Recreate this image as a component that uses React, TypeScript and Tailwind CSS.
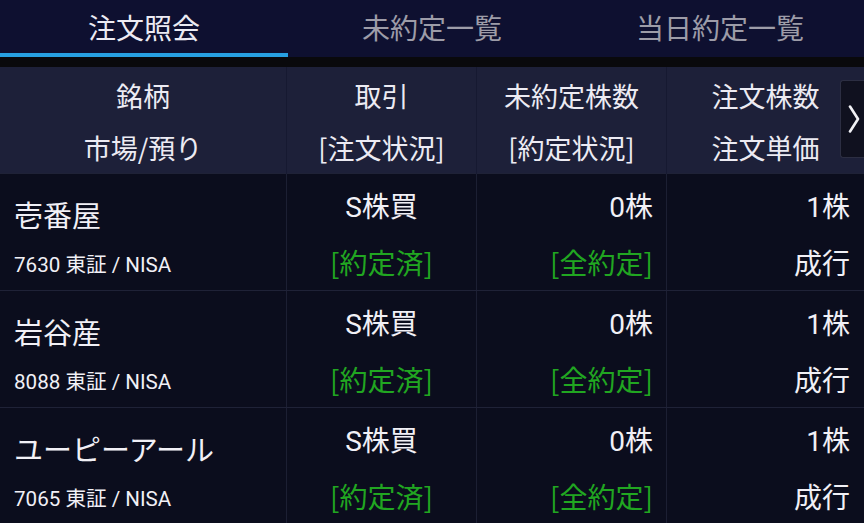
import React from "react";

const font = { fontFamily: '"Noto Sans CJK JP", "Noto Sans", sans-serif' };
const roboto = { fontFamily: 'Roboto, "Noto Sans CJK JP", sans-serif' };

type Row = { name: string; code: string };
const rows: Row[] = [
  { name: "壱番屋", code: "7630 東証 / NISA" },
  { name: "岩谷産", code: "8088 東証 / NISA" },
  { name: "ユーピーアール", code: "7065 東証 / NISA" },
];

function Tab({ label, active }: { label: string; active?: boolean }) {
  return (
    <div className="flex-1 flex flex-col">
      <div
        className={
          "flex-1 flex items-center justify-center text-[28px] pt-[1px] " +
          (active ? "text-[#ecebf3]" : "text-[#9d9ca8]")
        }
      >
        {label}
      </div>
      <div className={"h-[4px] " + (active ? "bg-[#27a0e2]" : "bg-transparent")} />
    </div>
  );
}

export default function App() {
  return (
    <div className="w-[864px] h-[523px] overflow-hidden bg-[#0b0d1d] relative" style={font}>
      {/* tabs */}
      <div className="h-[57px] flex bg-[#0e1030]">
        <Tab label="注文照会" active />
        <Tab label="未約定一覧" />
        <Tab label="当日約定一覧" />
      </div>
      <div className="h-[10px] bg-[#09090c]" />
      {/* header */}
      <div className="h-[106px] grid grid-cols-[286px_190px_190px_1fr] bg-[#1d2039] text-[#ecebf3] text-[27px] relative">
        <div className="flex flex-col items-center pt-[3px] leading-[52px]">
          <div>銘柄</div>
          <div>市場/預り</div>
        </div>
        <div className="flex flex-col items-center pt-[3px] leading-[52px] border-l border-[#161931]">
          <div>取引</div>
          <div>[注文状況]</div>
        </div>
        <div className="flex flex-col items-center pt-[3px] leading-[52px] border-l border-[#161931]">
          <div>未約定株数</div>
          <div>[約定状況]</div>
        </div>
        <div className="flex flex-col items-center pt-[3px] leading-[52px] border-l border-[#161931]">
          <div>注文株数</div>
          <div>注文単価</div>
        </div>
        <div className="absolute right-0 top-[13px] w-[24px] h-[78px] bg-[#10111f] border border-r-0 border-[#2c2e42] rounded-l-[3px] flex items-center justify-center">
          <svg width="12" height="28" viewBox="0 0 12 28" className="ml-[2px]">
            <polyline points="2,1.5 10,14 2,26.5" fill="none" stroke="#f2f2f6" strokeWidth="2.6" strokeLinecap="round" strokeLinejoin="round" />
          </svg>
        </div>
      </div>
      {/* rows */}
      {rows.map((r, i) => (
        <div
          key={i}
          className="h-[117px] grid grid-cols-[286px_190px_190px_1fr] border-t border-[#1f2237] text-[#f1f0f6]"
        >
          <div className="pl-[14px] pt-[12px]">
            <div className="text-[29px] leading-[56px]">{r.name}</div>
            <div className="text-[20.6px] leading-[40px] mt-[3px]" style={roboto}>
              {r.code}
            </div>
          </div>
          <div className="flex flex-col items-center pt-[4px] leading-[55px] text-[28px] border-l border-[#1c1f33]">
            <div>
              <span style={roboto}>S</span>株買
            </div>
            <div className="text-[#21a621]">[約定済]</div>
          </div>
          <div className="flex flex-col items-end pr-[13px] pt-[4px] leading-[55px] text-[28px] border-l border-[#1c1f33]">
            <div>
              <span style={roboto}>0</span>株
            </div>
            <div className="text-[#21a621]">[全約定]</div>
          </div>
          <div className="flex flex-col items-end pr-[14px] pt-[4px] leading-[55px] text-[28px] border-l border-[#1c1f33]">
            <div>
              <span style={roboto}>1</span>株
            </div>
            <div>成行</div>
          </div>
        </div>
      ))}
    </div>
  );
}
